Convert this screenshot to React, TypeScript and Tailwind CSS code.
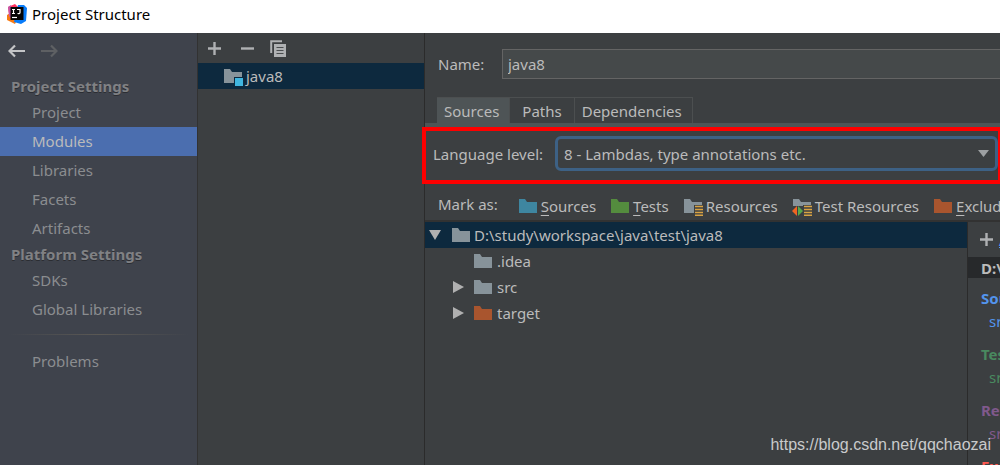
import clsx from "clsx";
import type { ReactNode } from "react";

const projectItems = ["Project", "Modules", "Libraries", "Facets", "Artifacts"];
const platformItems = ["SDKs", "Global Libraries"];
const tabs = ["Sources", "Paths", "Dependencies"];

const contentRoots = [
  { title: "Source Folders", path: "src\\main\\java", color: "text-[#5394ec]" },
  { title: "Test Source Folders", path: "src\\test\\java", color: "text-[#49895f]" },
  { title: "Resource Folders", path: "src\\main\\resources", color: "text-[#80598c]" },
  { title: "Excluded Folders", path: "target", color: "text-[#ff5a52]" },
];

function Folder({ fill = "#87939a", children }: { fill?: string; children?: ReactNode }) {
  return (
    <svg width="20" height="19" viewBox="0 0 20 19" className="shrink-0" aria-hidden="true">
      <path d="M1 2h6l2 3h10v11H1z" fill={fill} />
      {children}
    </svg>
  );
}

function ResourceLines() {
  return (
    <>
      <path d="M11 8h9v11h-9z" fill="#3c3f41" />
      <path d="M12 9.500h8M12 12.500h8M12 15.500h8M12 18.300h8" stroke="#d9a343" strokeWidth="1.500" />
    </>
  );
}

function IdeaLogo() {
  return (
    <svg width="20" height="20" viewBox="0 0 20 20" className="shrink-0" aria-hidden="true">
      <path d="M1 3l7-3 4 4-3 10-9 1 2-5z" fill="#fe315d" />
      <path d="M0 11l5-3 5 8-2 4-8-4z" fill="#f97a12" />
      <path d="M11 1l6 0 3 3-1 13-5 3-7-2z" fill="#087cfa" />
      <path d="M1 3l3-2 1 15-3-4z" fill="#c757a5" />
      <path d="M3.500 3h13v13h-13z" fill="#050505" />
      <path d="M5 5.500h3M6.500 5.500v4M5 9.500h3M10 5.500h3v3q0 1.500-2.500 1" fill="none" stroke="#fff" strokeWidth="1.200" />
      <path d="M5 13.500h5" stroke="#fff" strokeWidth="1.200" />
    </svg>
  );
}

function PlusIcon() {
  return (
    <svg width="13" height="13" viewBox="0 0 13 13" className="shrink-0" aria-hidden="true">
      <path d="M6.500 0v13M0 6.500h13" stroke="#afb1b3" strokeWidth="2.400" />
    </svg>
  );
}

function Arrow({ open = false }: { open?: boolean }) {
  return (
    <svg width="12" height="12" viewBox="0 0 12 12" className="shrink-0" aria-hidden="true">
      <path d={open ? "M0 1h12L6 11z" : "M1 0v12l11-6z"} fill="#b0b0b0" />
    </svg>
  );
}

function NavItem({ label, active = false }: { label: string; active?: boolean }) {
  return (
    <li>
      <button
        type="button"
        className={clsx(
          "flex h-[29px] w-full items-center pb-[2px] pl-8",
          active ? "bg-[#4b6eaf] text-[#bbbbbb]" : "text-[#8b8d90]"
        )}
      >
        {label}
      </button>
    </li>
  );
}

function NavHeading({ children }: { children: ReactNode }) {
  return (
    <h2 className="flex h-[23px] items-center pb-[2px] pl-[11px] font-bold text-[#808184] [text-shadow:0_1px_0_#2b2d32]">
      {children}
    </h2>
  );
}

function Sidebar() {
  return (
    <nav className="w-[198px] shrink-0 border-r border-[#323232] bg-[#3f434c]">
      <div className="flex h-[42px] items-center gap-4 pb-[6px] pl-2">
        <button type="button" aria-label="Back">
          <svg width="17" height="14" viewBox="0 0 17 14" fill="none" stroke="#c4c5c7" strokeWidth="2.200">
            <path d="M17 7H2M7 1.500L1.500 7 7 12.500" />
          </svg>
        </button>
        <button type="button" aria-label="Forward">
          <svg width="17" height="14" viewBox="0 0 17 14" fill="none" stroke="#5e6063" strokeWidth="2.200">
            <path d="M0 7h15M10 1.500l5.500 5.500-5.500 5.500" />
          </svg>
        </button>
      </div>
      <NavHeading>Project Settings</NavHeading>
      <ul>
        {projectItems.map((item) => (
          <NavItem key={item} label={item} active={item === "Modules"} />
        ))}
      </ul>
      <NavHeading>Platform Settings</NavHeading>
      <ul>
        {platformItems.map((item) => (
          <NavItem key={item} label={item} />
        ))}
      </ul>
      <div className="mx-2 mt-[10px] mb-3 h-px bg-linear-to-r from-transparent via-[#5a5854] to-transparent" />
      <ul>
        <NavItem label="Problems" />
      </ul>
    </nav>
  );
}

function ModuleList() {
  return (
    <section className="w-[227px] shrink-0 border-r border-[#2b2b2b]">
      <div className="flex h-[30px] items-center gap-5 pl-[10px]">
        <button type="button" aria-label="Add">
          <PlusIcon />
        </button>
        <button type="button" aria-label="Remove">
          <svg width="13" height="13" viewBox="0 0 13 13">
            <path d="M0 6.500h13" stroke="#afb1b3" strokeWidth="2.400" />
          </svg>
        </button>
        <button type="button" aria-label="Copy">
          <svg width="16" height="17" viewBox="0 0 16 17" className="-ml-1">
            <path d="M12 1.200H1.200V13" fill="none" stroke="#afb1b3" strokeWidth="2" />
            <path d="M4 4h12v13H4z" fill="#afb1b3" />
            <path d="M6.500 7.500h7M6.500 10.500h7M6.500 13.500h7" stroke="#4a4d4f" strokeWidth="1.200" />
          </svg>
        </button>
      </div>
      <div className="flex h-[26px] items-center gap-[3px] bg-[#0d293e] pl-[25px]">
        <Folder>
          <path d="M11 10h9v9h-9z" fill="#0d293e" />
          <path d="M12 11h8v8h-8z" fill="#40b6e0" />
        </Folder>
        <span>java8</span>
      </div>
    </section>
  );
}

function MarkButton({ icon, label, mnemonic = false }: { icon: ReactNode; label: string; mnemonic?: boolean }) {
  return (
    <button type="button" className="flex shrink-0 items-center gap-[3px] whitespace-nowrap">
      {icon}
      <span>
        {mnemonic ? <u className="underline-offset-3">{label[0]}</u> : label[0]}
        {label.slice(1)}
      </span>
    </button>
  );
}

function MarkBar() {
  return (
    <div className="flex h-[38px] items-center gap-[14px] overflow-hidden border-b-2 border-[#323232] pt-2 pl-[13px]">
      <span className="mr-[6px] shrink-0 pb-1">Mark as:</span>
      <MarkButton icon={<Folder fill="#3e86a0" />} label="Sources" mnemonic />
      <MarkButton icon={<Folder fill="#548c3e" />} label="Tests" mnemonic />
      <MarkButton
        icon={
          <Folder>
            <ResourceLines />
          </Folder>
        }
        label="Resources"
      />
      <MarkButton
        icon={
          <Folder>
            <ResourceLines />
            <path d="M0 9h11v10H0z" fill="#3c3f41" />
            <path d="M5 9v10L0 14z" fill="#f26522" />
            <path d="M6 9v10l5-5z" fill="#59a84b" />
          </Folder>
        }
        label="Test Resources"
      />
      <MarkButton icon={<Folder fill="#a9552e" />} label="Excluded" mnemonic />
    </div>
  );
}

function FileTree() {
  return (
    <ul className="min-w-0 flex-1">
      <li>
        <div className="flex h-[26px] items-center bg-[#0d293e] pl-1">
          <Arrow open />
          <span className="ml-[10px] flex items-center gap-[3px]">
            <Folder />
            D:\study\workspace\java\test\java8
          </span>
        </div>
        <ul>
          <li className="flex h-[26px] items-center gap-1 pl-12">
            <Folder />
            .idea
          </li>
          <li className="flex h-[26px] items-center gap-1 pl-[27px]">
            <Arrow />
            <span className="w-px" />
            <Folder />
            src
          </li>
          <li className="flex h-[26px] items-center gap-1 pl-[27px]">
            <Arrow />
            <span className="w-px" />
            <Folder fill="#a9552e" />
            target
          </li>
        </ul>
      </li>
    </ul>
  );
}

function ContentRoots() {
  return (
    <aside className="w-[33px] shrink-0 overflow-hidden border-l border-[#2b2b2b] whitespace-nowrap">
      <button type="button" className="flex h-[35px] items-center gap-[6px] pl-3">
        <PlusIcon />
        <span className="text-[#589df6] underline">Add Content Root</span>
      </button>
      <h3 className="flex h-[21px] items-center bg-[#27292b] pl-[13px] font-bold">
        D:\study\workspace\java\test\java8
      </h3>
      <div className="pt-[9px]">
        {contentRoots.map((root) => (
          <div key={root.title} className={clsx("h-14 pl-[13px]", root.color)}>
            <h4 className="h-[23px] leading-[23px] font-bold">{root.title}</h4>
            <p className="h-[23px] pl-2 leading-[23px]">{root.path}</p>
          </div>
        ))}
      </div>
    </aside>
  );
}

function Editor() {
  return (
    <main className="flex min-w-0 flex-1 flex-col">
      <div className="flex items-center pt-4 pl-[13px]">
        <label htmlFor="module-name" className="w-[64px] shrink-0">
          Name:
        </label>
        <input
          id="module-name"
          defaultValue="java8"
          className="h-[30px] min-w-0 flex-1 border border-r-0 border-[#646464] bg-[#45494a] px-[5px] outline-none"
        />
      </div>
      <div role="tablist" className="mt-[18px] flex pl-3">
        {tabs.map((tab) => (
          <button
            key={tab}
            type="button"
            role="tab"
            aria-selected={tab === "Sources"}
            className={clsx(
              "h-[26px] border-t border-r border-[#4c4f50]",
              tab === "Sources" && "bg-[#4e5456]",
              tab === "Paths" ? "px-3" : "pr-[10px] pl-[7px]"
            )}
          >
            {tab}
          </button>
        ))}
      </div>
      <div className="h-1 bg-[#4e5456]" />
      <div className="relative -ml-[3px] flex h-[57px] items-center border-4 border-r-2 border-[#fe0000] pb-1 pl-[7px]">
        <label htmlFor="language-level" className="w-[122px] shrink-0">
          Language level:
        </label>
        <div className="relative min-w-0 flex-1">
          <select
            id="language-level"
            className="block h-[35px] w-full appearance-none rounded-md border-3 border-[#3d6185] bg-[#3c3f41] px-[6px] outline-none"
          >
            <option>8 - Lambdas, type annotations etc.</option>
          </select>
          <svg
            width="11"
            height="7"
            viewBox="0 0 11 7"
            className="pointer-events-none absolute top-[14px] right-[9px]"
            aria-hidden="true"
          >
            <path d="M0 0h11L5.500 7z" fill="#9da0a2" />
          </svg>
        </div>
      </div>
      <MarkBar />
      <div className="flex min-h-0 flex-1">
        <FileTree />
        <ContentRoots />
      </div>
    </main>
  );
}

export default function App() {
  return (
    <div className="relative flex h-screen flex-col overflow-hidden bg-[#3c3f41] font-['Noto_Sans',sans-serif] text-[15px] leading-5 text-[#bbbbbb]">
      <header className="flex h-[33px] shrink-0 items-center gap-[5px] bg-white pb-[5px] pl-[7px] text-black">
        <IdeaLogo />
        <h1>Project Structure</h1>
      </header>
      <div className="flex min-h-0 flex-1">
        <Sidebar />
        <ModuleList />
        <Editor />
      </div>
      <a
        href="https://blog.csdn.net/qqchaozai"
        className="absolute right-[9px] bottom-2 font-['Liberation_Sans',sans-serif] text-base text-[#c9cacb]"
      >
        https://blog.csdn.net/qqchaozai
      </a>
    </div>
  );
}
